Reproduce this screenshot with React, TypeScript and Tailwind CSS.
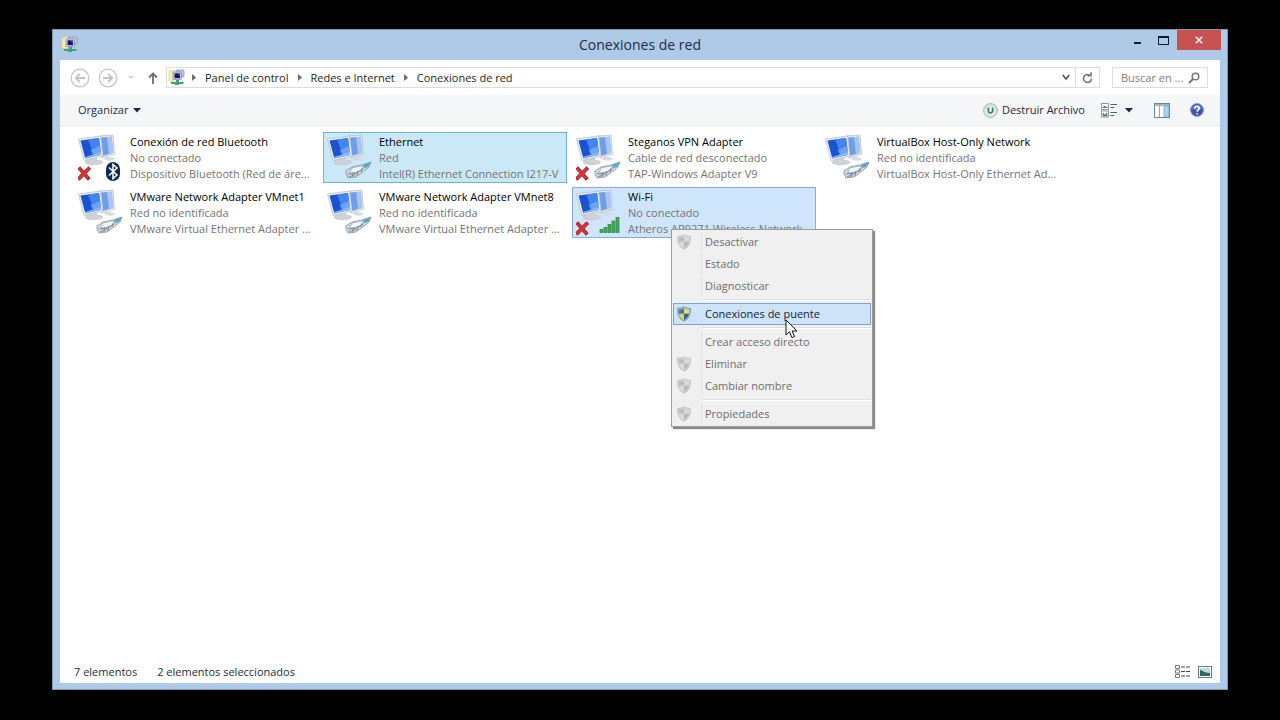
import { useState } from "react";
import clsx from "clsx";

type Badge = "cable" | "bluetooth" | "signal";

type Connection = {
  name: string;
  status: string;
  device: string;
  badge: Badge;
  offline?: boolean;
};

const connections: Connection[] = [
  { name: "Conexión de red Bluetooth", status: "No conectado", device: "Dispositivo Bluetooth (Red de áre...", badge: "bluetooth", offline: true },
  { name: "Ethernet", status: "Red", device: "Intel(R) Ethernet Connection I217-V", badge: "cable" },
  { name: "Steganos VPN Adapter", status: "Cable de red desconectado", device: "TAP-Windows Adapter V9", badge: "cable", offline: true },
  { name: "VirtualBox Host-Only Network", status: "Red no identificada", device: "VirtualBox Host-Only Ethernet Ad...", badge: "cable" },
  { name: "VMware Network Adapter VMnet1", status: "Red no identificada", device: "VMware Virtual Ethernet Adapter ...", badge: "cable" },
  { name: "VMware Network Adapter VMnet8", status: "Red no identificada", device: "VMware Virtual Ethernet Adapter ...", badge: "cable" },
  { name: "Wi-Fi", status: "No conectado", device: "Atheros AR9271 Wireless Network", badge: "signal", offline: true },
];

type MenuEntry = { label: string; shield?: boolean; enabled?: boolean };

const menuGroups: MenuEntry[][] = [
  [{ label: "Desactivar", shield: true }, { label: "Estado" }, { label: "Diagnosticar" }],
  [{ label: "Conexiones de puente", shield: true, enabled: true }],
  [{ label: "Crear acceso directo" }, { label: "Eliminar", shield: true }, { label: "Cambiar nombre", shield: true }],
  [{ label: "Propiedades", shield: true }],
];

const FolderNetIcon = () => (
  <svg width="17" height="17" viewBox="0 0 17 17" aria-hidden="true">
    <path d="M1 2 5 1v12l-4-1z" fill="#f6eeb0" stroke="#d8cd86" strokeWidth=".6" />
    <path d="M4 1h3v11H4z" fill="#eee39a" />
    <rect x="8" y="1" width="8" height="7" rx=".8" fill="#c5cbe4" stroke="#8289ae" strokeWidth=".7" />
    <rect x="5" y="3" width="8.5" height="7.5" rx=".8" fill="#d6daec" stroke="#767ea8" strokeWidth=".7" />
    <rect x="6.500" y="4.300" width="5.600" height="4.900" fill="#15165e" />
    <path d="M9 4.300h3.100v3z" fill="#4a63c6" />
    <path d="M8 11h3v2h4.500v2H11v1H7v-1H3v-2h5z" fill="#3fa27c" />
  </svg>
);

const Monitors = () => (
  <>
    <path d="M28 23h5l4 2c-1 2-8 2.500-11 0z" fill="#d9dcdf" />
    <path d="m21 2 14-1 1.500 19-12.500 4z" fill="#e6e9ee" stroke="#b3bac4" strokeWidth=".7" />
    <path d="m23 3.500 10.800-.8 1.200 16L25 22z" fill="#6f9de8" />
    <path d="m29 3 4.800-.3 1.200 16-4 1.200z" fill="#a5c6f7" />
    <path d="m11 24 7-1 1 3.500c4 0 6 .5 5.500 2-2 2.500-14 3-17 .5-.5-2 1-3 3.500-3z" fill="#cfd3d7" stroke="#b0b5ba" strokeWidth=".5" />
    <path d="M.5 5 22.500 2l2.500 20L6 26.500z" fill="#f0f2f5" stroke="#aeb7c4" strokeWidth=".7" />
    <path d="M2.500 6.500 21 4l2.200 16.700L7.300 24.500z" fill="#1a52d0" />
    <path d="M10 5.500 21 4l2.200 16.700-6.700 1.600z" fill="#4384f0" />
    <path d="m7 23 16-5 .2 2.700L7.300 24.500z" fill="#a6d0ff" opacity=".75" />
    <path d="m12.500 16 10-4 .7 6-8.200 3z" fill="#8ab9ff" opacity=".6" />
  </>
);

const ConnectionIcon = ({ badge, offline }: { badge: Badge; offline?: boolean }) => (
  <svg width="48" height="48" viewBox="0 0 48 48" className="shrink-0" aria-hidden="true">
    <Monitors />
    {badge === "cable" && (
      <g strokeLinejoin="round">
        <path d="m19 37 6-4 10-2 9-3-2 5-5 4-8 6-8 1-2-4z" fill="#cdd7de" stroke="#84939f" strokeWidth=".8" />
        <path d="m25 34 9-2 3 2-6 4-8 1z" fill="#f3f6f8" stroke="#94a2ad" strokeWidth=".6" />
        <path d="m36 31 8-3-3 5-4 1z" fill="#5ba7c6" />
        <path d="m21 40 8-1 7-4M22 43l7-3M31 37l-1 5M26 39v4M35 34l-1 4" fill="none" stroke="#6b7c89" strokeWidth=".8" />
      </g>
    )}
    {badge === "bluetooth" && (
      <g>
        <rect x="28" y="28" width="14" height="19" rx="7" fill="#0c2c5c" />
        <path d="m31 33.500 8 7.500-4 3.500v-14l4 3.500-8 7.500" fill="none" stroke="#fff" strokeWidth="1.500" />
      </g>
    )}
    {badge === "signal" && (
      <g fill="#48a861" stroke="#2b7f43" strokeWidth=".7">
        <rect x="24" y="40.500" width="3" height="3" />
        <rect x="28" y="38.500" width="3" height="5" />
        <rect x="32" y="35.500" width="3" height="8" />
        <rect x="36" y="32" width="3" height="11.500" />
        <rect x="40" y="28.500" width="3" height="15" />
      </g>
    )}
    {offline && (
      <g strokeLinecap="square">
        <path d="m2 35 8 9M10.500 35 1.500 44" stroke="#9d2226" strokeWidth="3.800" />
        <path d="m2 35 8 9M10.500 35 1.500 44" stroke="#dc3438" strokeWidth="2.300" />
      </g>
    )}
  </svg>
);

const ShieldIcon = ({ color }: { color?: boolean }) => (
  <svg width="16" height="16" viewBox="0 0 16 16" aria-hidden="true">
    <path d="M8 .8c2 1.300 4 1.700 6.300 1.500.4 6.200-1.500 10.400-6.300 12.900C3.200 12.700 1.300 8.500 1.700 2.300 4 2.500 6 2.100 8 .8z" fill={color ? "#a9b7c6" : "#dcdcdc"} stroke={color ? "#708496" : "#b4b4b4"} strokeWidth=".8" />
    <path d="M8 2.500v5.300H3C2.800 6.500 2.800 5 2.900 3.600 5 3.700 6.600 3.300 8 2.500z" fill={color ? "#3c78b8" : "#bcbcbc"} />
    <path d="M8 2.500v5.300h5c.2-1.300.2-2.800.1-4.200C11 3.700 9.400 3.300 8 2.500z" fill={color ? "#e8dc5c" : "#d8d8d8"} />
    <path d="M8 7.800H3c.6 2.700 2.300 4.700 5 6.100z" fill={color ? "#e4d752" : "#dadada"} />
    <path d="M8 7.800h5c-.6 2.700-2.300 4.700-5 6.100z" fill={color ? "#2f669c" : "#b8b8b8"} />
  </svg>
);

const CrumbArrow = () => (
  <svg width="4" height="7" viewBox="0 0 4 7" className="shrink-0" aria-hidden="true">
    <path d="M0 0v7l4-3.500z" fill="#6b6b6b" />
  </svg>
);

const DownTriangle = () => (
  <svg width="8" height="5" viewBox="0 0 8 5" aria-hidden="true">
    <path d="M0 0h8L4 4.500z" fill="#1e2b47" />
  </svg>
);

const TitleBar = () => (
  <header className="relative flex h-[30px] items-start">
    <div className="pt-[6px] pl-2">
      <FolderNetIcon />
    </div>
    <h1 className="absolute inset-x-0 top-0 text-center text-[14px] leading-[30px] text-[#1e2c44]">Conexiones de red</h1>
    <div className="relative ml-auto flex pr-[6px]">
      <button type="button" aria-label="Minimizar" className="flex h-5 w-[26px] items-center justify-center">
        <svg width="9" height="9" viewBox="0 0 9 9"><path d="M1 6h7v2H1z" fill="#101b30" /></svg>
      </button>
      <button type="button" aria-label="Maximizar" className="flex h-5 w-[27px] items-center justify-center">
        <svg width="11" height="9" viewBox="0 0 11 9"><path d="M0 0h11v9H0zM1 2v6h9V2z" fill="#101b30" fillRule="evenodd" /></svg>
      </button>
      <button type="button" aria-label="Cerrar" className="flex h-5 w-11 items-center justify-center bg-[#c75050]">
        <svg width="8" height="8" viewBox="0 0 8 8"><path d="m.8.8 6.400 6.400M7.200.8.8 7.200" stroke="#fff" strokeWidth="1.600" /></svg>
      </button>
    </div>
  </header>
);

const NavBar = () => (
  <nav className="flex h-[35px] items-center pr-3 pl-[10px]">
    <button type="button" aria-label="Atrás" className="mr-2">
      <svg width="20" height="20" viewBox="0 0 20 20" fill="none" stroke="#c4c4c4">
        <circle cx="10" cy="10" r="8.800" strokeWidth="1.200" />
        <path d="M15 10H6m3.800-4L5.800 10l4 4" strokeWidth="1.800" />
      </svg>
    </button>
    <button type="button" aria-label="Adelante" className="mr-[10px]">
      <svg width="20" height="20" viewBox="0 0 20 20" fill="none" stroke="#c4c4c4">
        <circle cx="10" cy="10" r="8.800" strokeWidth="1.200" />
        <path d="M5 10h9m-3.800-4 4 4-4 4" strokeWidth="1.800" />
      </svg>
    </button>
    <button type="button" aria-label="Ubicaciones recientes" className="mr-[14px]">
      <svg width="6" height="4" viewBox="0 0 6 4"><path d="M0 0h6L3 3z" fill="#d2d2d2" /></svg>
    </button>
    <button type="button" aria-label="Subir" className="mr-2">
      <svg width="10" height="12" viewBox="0 0 10 12" fill="none" stroke="#6c6c6c" strokeWidth="1.800">
        <path d="M5 12V1.500M1 5.500l4-4 4 4" />
      </svg>
    </button>
    <div className="flex h-[21px] min-w-0 flex-1 items-center border border-[#dcdcdc] bg-white pl-px text-[#1e1e1e]">
      <FolderNetIcon />
      <div className="flex flex-1 items-center gap-[9px] pl-[7px] whitespace-nowrap">
        <CrumbArrow />
        <a href="#panel">Panel de control</a>
        <CrumbArrow />
        <a href="#redes">Redes e Internet</a>
        <CrumbArrow />
        <a href="#conexiones">Conexiones de red</a>
      </div>
      <button type="button" aria-label="Ubicaciones anteriores" className="flex w-[18px] justify-center">
        <svg width="8" height="7" viewBox="0 0 8 7" fill="none" stroke="#555" strokeWidth="1.700"><path d="m.8 1 3.200 4L7.200 1" /></svg>
      </button>
      <button type="button" aria-label="Actualizar" className="flex h-full w-6 items-center justify-center border-l border-[#dcdcdc]">
        <svg width="11" height="12" viewBox="0 0 11 12" fill="none" stroke="#777" strokeWidth="1.600">
          <path d="M9.500 6.500A4 4 0 1 1 7.500 3" />
          <path d="M5.500 3.800H9V.3" />
        </svg>
      </button>
    </div>
    <div className="ml-3 flex h-[21px] w-24 items-center border border-[#dcdcdc] bg-white pr-[7px] pl-2">
      <input
        type="text"
        aria-label="Buscar en Conexiones de red"
        placeholder="Buscar en ..."
        className="w-[67px] min-w-0 bg-transparent outline-none placeholder:text-[#808080]"
      />
      <svg width="12" height="12" viewBox="0 0 12 12" className="shrink-0" fill="none" stroke="#777">
        <circle cx="7.500" cy="4.500" r="3.300" strokeWidth="1.500" />
        <path d="M5 7 1 11" strokeWidth="2" />
      </svg>
    </div>
  </nav>
);

const Toolbar = () => (
  <div className="flex h-[31px] items-center border-b border-[#ebeef0] bg-[#f5f6f7] pr-4 pl-[18px] text-[#1e2b47]">
    <button type="button" className="flex items-center gap-[5px]">
      Organizar <DownTriangle />
    </button>
    <button type="button" className="ml-auto flex items-center gap-1">
      <svg width="15" height="15" viewBox="0 0 15 15" aria-hidden="true">
        <circle cx="7.500" cy="7.500" r="7" fill="#cfdcd9" stroke="#9eb0ae" strokeWidth=".8" />
        <circle cx="7.500" cy="7.500" r="5.200" fill="#e6f2e9" />
        <path d="M5.300 4.500v3.200a2.200 2.200 0 0 0 4.400 0V4.500" fill="none" stroke="#3d8560" strokeWidth="1.700" />
      </svg>
      Destruir Archivo
    </button>
    <button type="button" aria-label="Cambiar vista" className="ml-4">
      <svg width="16" height="15" viewBox="0 0 16 15">
        <rect x=".5" y=".5" width="7" height="6" fill="#fff" stroke="#8d98a5" />
        <rect x=".5" y="8" width="7" height="6" fill="#fff" stroke="#8d98a5" />
        <path d="M2 5V4l1.500-1.500L5 4l1.500-.5V5z" fill="#3d6fb5" />
        <path d="M2 13v-3l2 2 2-2v3z" fill="#4f8462" stroke="#4f8462" strokeWidth=".6" />
        <path d="M9.500 1.500H16M9.500 4.500H13M9.500 9.500H16M9.500 12.500H13" stroke="#4f5a68" />
      </svg>
    </button>
    <button type="button" aria-label="Más opciones" className="ml-2">
      <DownTriangle />
    </button>
    <button type="button" aria-label="Panel de vista previa" className="ml-[21px]">
      <svg width="16" height="15" viewBox="0 0 16 15">
        <rect x=".5" y=".5" width="15" height="14" fill="#fff" stroke="#6c8395" />
        <path d="M1 2h14" stroke="#8fa5b6" strokeWidth="1.600" />
        <path d="M5.500 2v12" stroke="#9aa9b5" />
        <path d="M10 3h5v11h-5z" fill="#a4d5f3" stroke="#6ba1c2" strokeWidth=".7" />
      </svg>
    </button>
    <button type="button" aria-label="Ayuda" className="ml-5">
      <svg width="14" height="14" viewBox="0 0 14 14">
        <circle cx="7" cy="7" r="6.400" fill="#3f52b5" stroke="#8a93ba" />
        <path d="M2 6a5 4 0 0 1 10 0c-3 1-7 1-10 0z" fill="#7d93e4" opacity=".7" />
        <path d="M4.800 5.400c0-3 4.600-2.800 4.400 0C9.100 6.800 7.200 7 7.100 8.600M7.100 10v1.600" fill="none" stroke="#fff" strokeWidth="1.600" />
      </svg>
    </button>
  </div>
);

const ContextMenu = () => (
  <div role="menu" className="absolute top-[42px] left-[99px] z-10 w-[202px] border border-[#9b9b9b] bg-[#f0f0f0] p-px shadow-[2px_2px_1px_#8a8a8a]">
    {menuGroups.map((group, index) => (
      <div key={group[0].label} role="group">
        {index > 0 && <div className="my-[2px] ml-[29px] h-[2px] border-t border-b border-t-[#dedede] border-b-white" />}
        {group.map((entry) => (
          <button
            key={entry.label}
            type="button"
            role="menuitem"
            disabled={!entry.enabled}
            className={clsx(
              "flex h-[22px] w-full items-center text-left",
              entry.enabled ? "border border-[#7da2ce] bg-[#cde3f8] text-[#16233a]" : "border border-transparent text-[#6d6d6d]",
            )}
          >
            <span className={clsx("flex h-full w-7 shrink-0 items-center pl-[2px]", !entry.enabled && "border-r border-[#e2e3e3]")}>
              {entry.shield && <ShieldIcon color={entry.enabled} />}
            </span>
            <span className="pl-[3px]">{entry.label}</span>
          </button>
        ))}
      </div>
    ))}
    <svg width="13" height="20" viewBox="0 0 13 20" className="absolute top-[89px] left-[113px]" aria-hidden="true">
      <path d="M1 1v15l3.500-3.200L7 18.600l2.500-1.100L7.100 12H12z" fill="#fff" stroke="#111" />
    </svg>
  </div>
);

const StatusBar = ({ total, selected }: { total: number; selected: number }) => (
  <footer className="flex h-[23px] items-center gap-5 pr-2 pl-[14px] text-[#1e2b47]">
    <span>{total} elementos</span>
    <span>{selected} elementos seleccionados</span>
    <div className="ml-auto flex items-center gap-2">
      <button type="button" aria-label="Vista de detalles">
        <svg width="15" height="13" viewBox="0 0 15 13" fill="none">
          <path d="M.5.500h4v3h-4zM.5 5h4v3h-4zM.5 9.500h4v3h-4z" stroke="#777" />
          <path d="M6 2h4m1 0h4M6 6.500h4m1 0h4M6 11h4m1 0h4" stroke="#444" />
        </svg>
      </button>
      <button type="button" aria-label="Iconos grandes">
        <svg width="14" height="12" viewBox="0 0 14 12">
          <rect x=".5" y=".5" width="13" height="11" fill="#fff" stroke="#70787d" />
          <path d="M2 2h10v8H2z" fill="#b9dce4" />
          <path d="M2 4c3 0 3 3 10 3v3H2z" fill="#2d6662" />
        </svg>
      </button>
    </div>
  </footer>
);

const App = () => {
  const [selected, setSelected] = useState(["Ethernet", "Wi-Fi"]);

  const toggle = (name: string) => {
    setSelected((prev) => (prev.includes(name) ? prev.filter((n) => n !== name) : [...prev, name]));
  };

  return (
    <div className="flex min-h-screen bg-black px-[52px] pt-[29px] pb-[30px] font-['Open_Sans',sans-serif] text-[11px] leading-4">
      <div className="flex flex-1 flex-col border border-[#7f97b3] bg-[#aecae6] px-[7px] pb-[6px]">
        <div className="-mx-[7px]">
          <TitleBar />
        </div>
        <div className="flex flex-1 flex-col bg-white">
          <NavBar />
          <Toolbar />
          <main className="flex-1 pt-[6px] pl-[14px]">
            <ul className="grid grid-cols-[repeat(auto-fill,244px)] gap-x-[5px] gap-y-1">
              {connections.map((c) => {
                const isSelected = selected.includes(c.name);
                return (
                  <li key={c.name} className="relative">
                    <button
                      type="button"
                      aria-pressed={isSelected}
                      onClick={() => toggle(c.name)}
                      className={clsx(
                        "flex h-[51px] w-full items-center gap-1 border pl-[3px] text-left whitespace-nowrap",
                        !isSelected && "border-transparent",
                        isSelected && c.name === "Wi-Fi" && "border-[#84acdd] bg-[#cfe5fb]",
                        isSelected && c.name !== "Wi-Fi" && "border-[#70b5cf] bg-[#cbe8f6]",
                      )}
                    >
                      <ConnectionIcon badge={c.badge} offline={c.offline} />
                      <span className="flex flex-col text-[#747474]">
                        <span className="text-black">{c.name}</span>
                        <span>{c.status}</span>
                        <span>{c.device}</span>
                      </span>
                    </button>
                    {c.name === "Wi-Fi" && <ContextMenu />}
                  </li>
                );
              })}
            </ul>
          </main>
          <StatusBar total={connections.length} selected={selected.length} />
        </div>
      </div>
    </div>
  );
};

export default App;
